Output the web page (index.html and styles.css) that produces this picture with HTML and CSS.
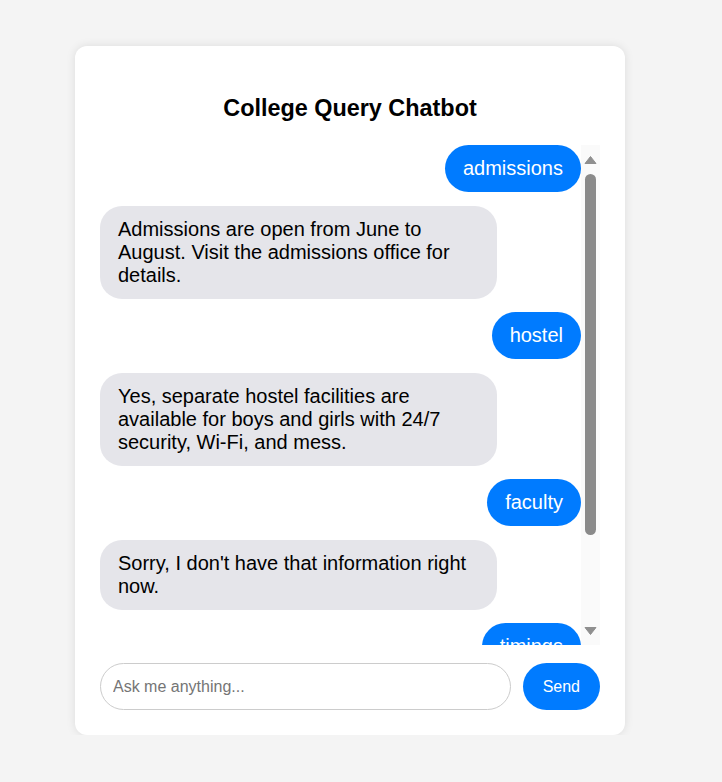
FILE: index.html
```html
<!DOCTYPE html>
<html lang="en">
<head>
<meta charset="UTF-8">
<title>College Query Chatbot</title>
<link rel="stylesheet" href="styles.css">
</head>
<body>
  <div class="card">
    <h2 class="title">College Query Chatbot</h2>
    <div class="chat-wrap">
      <div class="chat">
        <div class="msg user">admissions</div>
        <div class="msg bot">Admissions are open from June to August. Visit the admissions office for details.</div>
        <div class="msg user">hostel</div>
        <div class="msg bot">Yes, separate hostel facilities are available for boys and girls with 24/7 security, Wi-Fi, and mess.</div>
        <div class="msg user">faculty</div>
        <div class="msg bot">Sorry, I don't have that information right now.</div>
        <div class="msg user">timings</div>
        <div class="msg bot">Classes run from 9 AM to 4 PM, Monday to Saturday.</div>
      </div>
      <div class="scrollbar" aria-hidden="true">
        <div class="sb-btn">
          <svg width="19" height="29" viewBox="0 0 19 29"><path d="M4 18.5 L9.5 11.5 L15 18.5 Z" fill="#8f8f8f" stroke="#8f8f8f" stroke-linejoin="round"/></svg>
        </div>
        <div class="sb-track">
          <div class="sb-thumb"></div>
        </div>
        <div class="sb-btn">
          <svg width="19" height="29" viewBox="0 0 19 29"><path d="M4 11.5 L15 11.5 L9.5 18.5 Z" fill="#8f8f8f" stroke="#8f8f8f" stroke-linejoin="round"/></svg>
        </div>
      </div>
    </div>
    <div class="input-row">
      <input class="query" type="text" placeholder="Ask me anything...">
      <button class="send">Send</button>
    </div>
  </div>
</body>
</html>
```
FILE: styles.css
```css
html, body {
  margin: 0;
  padding: 0;
}
body {
  background: #f4f4f4;
  font-family: "Liberation Sans", Arial, sans-serif;
}
.card {
  width: 500px;
  margin: 46px 0 0 75px;
  padding: 25px;
  background: #fff;
  border-radius: 12px;
  box-shadow: 0 0 10px rgba(0, 0, 0, 0.1);
}
.title {
  margin: 24px 0 23px;
  font-size: 23.4px;
  font-weight: bold;
  text-align: center;
  color: #000;
}
.chat-wrap {
  display: flex;
  height: 500px;
}
.chat {
  flex: 1;
  min-width: 0;
  overflow: hidden;
  display: flex;
  flex-direction: column;
  gap: 13.5px;
}
.scrollbar {
  width: 19px;
  flex-shrink: 0;
  display: flex;
  flex-direction: column;
  background: #fafafa;
}
.sb-btn {
  height: 29px;
  flex-shrink: 0;
}
.sb-btn svg {
  display: block;
}
.sb-track {
  flex: 1;
  padding: 0 4px;
}
.sb-thumb {
  height: 361px;
  background: #8a8a8a;
  border-radius: 6px;
}
.msg {
  max-width: 75%;
  padding: 12px 18px;
  border-radius: 22px;
  font-size: 20px;
  line-height: 23px;
  flex-shrink: 0;
}
.user {
  align-self: flex-end;
  background: #007bff;
  color: #fff;
  border-radius: 25px;
}
.bot {
  align-self: flex-start;
  background: #e5e5ea;
  color: #000;
}
.input-row {
  display: flex;
  gap: 12px;
  margin-top: 18px;
}
.query {
  flex: 1;
  height: 47px;
  box-sizing: border-box;
  padding: 0 12px;
  border: 1px solid #ccc;
  border-radius: 25px;
  font-family: "Liberation Sans", Arial, sans-serif;
  font-size: 16px;
  outline: none;
}
.query::placeholder {
  color: #757575;
}
.send {
  height: 47px;
  padding: 0 20px;
  border: none;
  border-radius: 25px;
  background: #007bff;
  color: #fff;
  font-family: "Liberation Sans", Arial, sans-serif;
  font-size: 16px;
}
```
